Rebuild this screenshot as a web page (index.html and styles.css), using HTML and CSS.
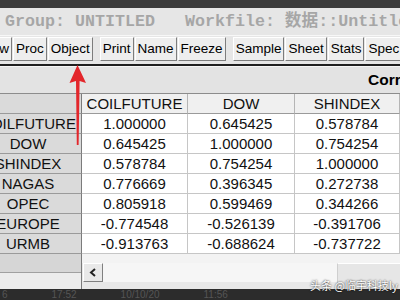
FILE: index.html
```html
<!DOCTYPE html>
<html lang="zh">
<head>
    <meta charset="UTF-8">
    <title>Group: UNTITLED</title>
    <link rel="stylesheet" href="styles.css">
</head>
<body>
<div class="screen">
    <div class="topstrip"></div>
    <div class="titlebar">Group: UNTITLED   Workfile: 数据::Untitled</div>

    <div class="toolbar">
        <span class="btn first">View</span>
        <span class="btn">Proc</span>
        <span class="btn">Object</span>
        <span class="btn group">Print</span>
        <span class="btn">Name</span>
        <span class="btn">Freeze</span>
        <span class="btn group">Sample</span>
        <span class="btn">Sheet</span>
        <span class="btn">Stats</span>
        <span class="btn">Spec</span>
    </div>
    <div class="sep"></div>

    <div class="caption">Correlation</div>

    <div class="sheet">
        <div class="cell label"></div>
        <div class="cell head">COILFUTURE</div>
        <div class="cell head">DOW</div>
        <div class="cell head">SHINDEX</div>
        <div class="cell head"></div>

        <div class="cell label">COILFUTURE</div>
        <div class="cell">1.000000</div>
        <div class="cell">0.645425</div>
        <div class="cell">0.578784</div>
        <div class="cell"></div>

        <div class="cell label">DOW</div>
        <div class="cell">0.645425</div>
        <div class="cell">1.000000</div>
        <div class="cell">0.754254</div>
        <div class="cell"></div>

        <div class="cell label">SHINDEX</div>
        <div class="cell">0.578784</div>
        <div class="cell">0.754254</div>
        <div class="cell">1.000000</div>
        <div class="cell"></div>

        <div class="cell label">NAGAS</div>
        <div class="cell">0.776669</div>
        <div class="cell">0.396345</div>
        <div class="cell">0.272738</div>
        <div class="cell"></div>

        <div class="cell label">OPEC</div>
        <div class="cell">0.805918</div>
        <div class="cell">0.599469</div>
        <div class="cell">0.344266</div>
        <div class="cell"></div>

        <div class="cell label">EUROPE</div>
        <div class="cell">-0.774548</div>
        <div class="cell">-0.526139</div>
        <div class="cell">-0.391706</div>
        <div class="cell"></div>

        <div class="cell label">URMB</div>
        <div class="cell">-0.913763</div>
        <div class="cell">-0.688624</div>
        <div class="cell">-0.737722</div>
        <div class="cell"></div>
    </div>

    <div class="foot">
        <div class="foot-left">
            <div class="foot-left-top"></div>
        </div>
        <div class="foot-main">
            <div class="hscroll">
                <span class="arrow">
                    <svg width="8" height="9" viewBox="0 0 8 9"><polyline points="6,1 2,4.5 6,8" fill="none" stroke="#222" stroke-width="2"/></svg>
                </span>
                <span class="track"></span>
                <span class="thumb"></span>
            </div>
        </div>
    </div>

    <div class="statusbar">
        <span>6</span><span>17:52</span><span>10/10/20</span><span>11:56</span>
    </div>

    <svg class="pointer" width="400" height="300" viewBox="0 0 400 300">
        <polygon points="77.5,65 86,83 79.6,81 78.6,145 76.8,145 76,81 69.5,83" fill="#e3262b"/>
    </svg>
    <div class="watermark">头条 @临宇科技ly</div>
</div>
</body>
</html>
```

FILE: styles.css
```css
* {
    margin: 0;
    padding: 0;
    box-sizing: border-box;
}

body {
    width: 400px;
    height: 300px;
    overflow: hidden;
    background-color: #2c2c2c;
    font-family: "Liberation Sans", Arial, sans-serif;
}

.screen {
    width: 400px;
    height: 300px;
    overflow: hidden;
    position: relative;
}

.topstrip {
    height: 8px;
    background-color: #3b3b3b;
}

.titlebar {
    height: 27px;
    padding-left: 5px;
    background-color: #e6e6e6;
    color: #a6a6a6;
    font: bold 16.67px/27px "Liberation Mono", "Noto Sans CJK SC", monospace;
    white-space: pre;
    overflow: hidden;
}

.toolbar {
    height: 29px;
    padding-top: 1px;
    border-top: 1px solid #f7f7f7;
    background-color: #e6e6e6;
    display: flex;
    gap: 1px;
    white-space: nowrap;
}

.btn {
    height: 24px;
    padding: 0 2px;
    border: 1px solid;
    border-color: #fff #7d7d7d #7d7d7d #fff;
    background-color: #eeeeee;
    color: #000;
    font-size: 13.5px;
    line-height: 22px;
    flex-shrink: 0;
}

.btn.first {
    margin-left: -23px;
}

.btn.group {
    margin-left: 6px;
}

.sep {
    height: 2px;
    background-color: #1f1f1f;
}

.caption {
    height: 28px;
    padding-left: 368px;
    border-top: 1px solid #f6f6f6;
    border-bottom: 1px solid #8c8c8c;
    background-color: #e3e3e3;
    color: #000;
    font-weight: bold;
    font-size: 15.5px;
    line-height: 26px;
    white-space: nowrap;
    overflow: hidden;
}

.sheet {
    margin-left: -25px;
    width: 484px;
    display: grid;
    grid-template-columns: 107px 106px 107px 105px 59px;
}

.cell {
    height: 20px;
    border-right: 1px solid #c6c6c6;
    border-bottom: 1px solid #c6c6c6;
    background-color: #fff;
    color: #111;
    font-size: 15px;
    line-height: 19px;
    text-align: center;
    white-space: nowrap;
    overflow: hidden;
}

.cell.label {
    background-color: #dadada;
    border-right-color: #7b7b7b;
    border-bottom-color: #9a9a9a;
}

.cell.head {
    background-color: #f0f0f0;
    border-right-color: #b5b5b5;
    border-bottom-color: #9a9a9a;
}

.foot {
    height: 35px;
    display: flex;
}

.foot-left {
    width: 82px;
    border-right: 1px solid #7b7b7b;
    background-color: #ececec;
}

.foot-left-top {
    height: 19px;
    border-bottom: 1px solid #a0a0a0;
    background-color: #d6d6d6;
}

.foot-main {
    flex: 1;
    padding-top: 9px;
    background-color: #f3f3f3;
}

.hscroll {
    height: 26px;
    display: flex;
    background-color: #e8e8e8;
}

.arrow {
    width: 20px;
    height: 19px;
    margin-left: 1px;
    border: 1px solid;
    border-color: #fff #808080 #808080 #fff;
    background-color: #e9e9e9;
    display: flex;
    align-items: center;
    justify-content: center;
}

.track {
    flex: 1;
    height: 19px;
    background-color: #f6f6f6;
}

.thumb {
    width: 63px;
    border-top: 1px solid #fff;
    border-left: 1px solid #cfcfcf;
    background-color: #e6e6e6;
}

.statusbar {
    height: 11px;
    padding-left: 2px;
    background-color: #2c2c2c;
    color: #555;
    font-size: 10px;
    line-height: 11px;
    display: flex;
    gap: 44px;
    white-space: nowrap;
}

.pointer {
    position: absolute;
    left: 0;
    top: 0;
    pointer-events: none;
}

.watermark {
    position: absolute;
    left: 310px;
    top: 278px;
    color: #fff;
    font-size: 11px;
    line-height: 14px;
    font-family: "Noto Sans CJK SC", sans-serif;
    text-shadow: 0 0 2px #000;
    white-space: nowrap;
}
```
